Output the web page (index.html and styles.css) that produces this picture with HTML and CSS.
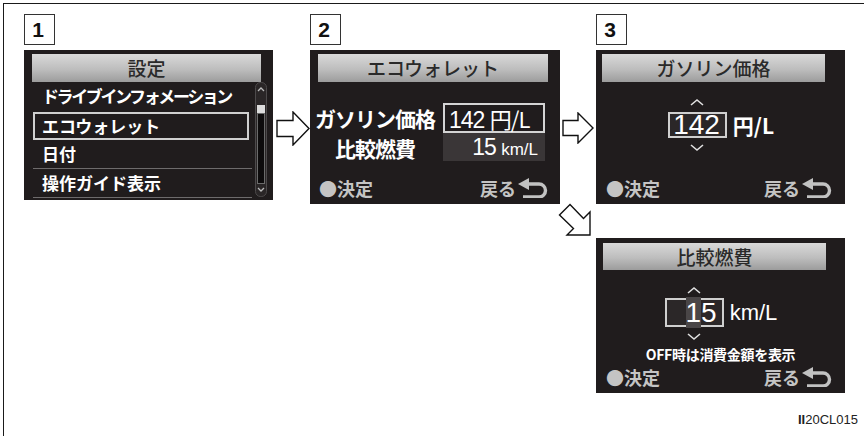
FILE: index.html
```html
<!DOCTYPE html>
<html lang="ja">
<head>
    <meta charset="UTF-8">
    <meta name="viewport" content="width=device-width, initial-scale=1.0">
    <title>エコウォレット設定</title>
    <link rel="stylesheet" href="styles.css">
</head>
<body>
    <div class="frame">
        <div class="row-top">
            <!-- step 1: settings menu -->
            <div class="step">
                <div class="step-no">1</div>
                <div class="screen screen-menu">
                    <div class="screen-title">設定</div>
                    <div class="menu-body">
                        <ul class="menu-list">
                            <li class="menu-item menu-item-first">ドライブインフォメーション</li>
                            <li class="menu-item is-selected">エコウォレット</li>
                            <li class="menu-item">日付</li>
                            <li class="menu-item">操作ガイド表示</li>
                        </ul>
                        <svg class="scrollbar" width="12" height="115" viewBox="0 0 12 115">
                            <rect x="0.5" y="0.5" width="11" height="114" rx="5" fill="#2a2627" stroke="#4d4a4b"/>
                            <polyline points="3,9 6,6 9,9" fill="none" stroke="#bcbcbc" stroke-width="1.3"/>
                            <rect x="2" y="23" width="8" height="8" fill="#dcdcdc"/>
                            <rect x="2.5" y="31.5" width="7" height="70" fill="#0d0b0c" stroke="#6b6b6b"/>
                            <polyline points="3,106 6,109 9,106" fill="none" stroke="#bcbcbc" stroke-width="1.3"/>
                        </svg>
                    </div>
                </div>
            </div>

            <svg class="arrow arrow-first" width="34" height="35" viewBox="0 0 34 35">
                <polygon points="1,9.5 17,9.5 17,1 33,17.5 17,34 17,25.5 1,25.5" fill="#fff" stroke="#111" stroke-width="1.4" stroke-linejoin="miter"/>
            </svg>

            <!-- step 2: eco wallet -->
            <div class="step">
                <div class="step-no">2</div>
                <div class="screen screen-eco">
                    <div class="screen-title">エコウォレット</div>
                    <div class="eco-grid">
                        <div class="eco-label">ガソリン価格</div>
                        <div class="eco-value eco-value-box">142 <span class="cjk">円/L</span></div>
                        <div class="eco-label">比較燃費</div>
                        <div class="eco-value eco-value-fill">15 <span class="eco-small">km/L</span></div>
                    </div>
                    <div class="screen-foot">
                        <span>●決定</span>
                        <span class="foot-back">戻る<svg class="back-icon" width="30" height="20" viewBox="0 0 30 20"><polygon points="0,6 11,0 11,12" fill="#c2c2c2"/><path d="M9 6 H21 A6.5 6.5 0 0 1 21 19 H5" fill="none" stroke="#c2c2c2" stroke-width="3.4"/></svg></span>
                    </div>
                </div>
            </div>

            <svg class="arrow arrow-second" width="32" height="32" viewBox="0 0 32 32">
                <polygon points="1,8.5 16,8.5 16,1 31,16 16,31 16,23.5 1,23.5" fill="#fff" stroke="#111" stroke-width="1.4"/>
            </svg>

            <!-- step 3: fuel price -->
            <div class="step">
                <div class="step-no">3</div>
                <div class="screen screen-edit">
                    <div class="screen-title">ガソリン価格</div>
                    <div class="spinner">
                        <svg class="chev" width="14" height="8" viewBox="0 0 14 8"><polyline points="1,7 7,2 13,7" fill="none" stroke="#e0e0e0" stroke-width="1.6"/></svg>
                        <span></span>
                        <div class="spin-box">142</div>
                        <div class="spin-unit cjk">円/L</div>
                        <svg class="chev" width="14" height="8" viewBox="0 0 14 8"><polyline points="1,1 7,6 13,1" fill="none" stroke="#e0e0e0" stroke-width="1.6"/></svg>
                        <span></span>
                    </div>
                    <div class="screen-foot screen-foot-edit">
                        <span>●決定</span>
                        <span class="foot-back">戻る<svg class="back-icon" width="30" height="20" viewBox="0 0 30 20"><polygon points="0,6 11,0 11,12" fill="#c2c2c2"/><path d="M9 6 H21 A6.5 6.5 0 0 1 21 19 H5" fill="none" stroke="#c2c2c2" stroke-width="3.4"/></svg></span>
                    </div>
                </div>
            </div>
        </div>

        <div class="row-low">
            <svg class="arrow-diag" width="34" height="34" viewBox="0 0 34 34">
                <polygon points="12,1.5 25.5,15.5 32,9 32,32 9,32 15.5,25.5 1.5,12" fill="#fff" stroke="#111" stroke-width="1.4"/>
            </svg>

            <!-- step 3b: compared mileage -->
            <div class="screen screen-edit screen-mileage">
                <div class="screen-title">比較燃費</div>
                <div class="spinner spinner-mileage">
                    <svg class="chev" width="14" height="8" viewBox="0 0 14 8"><polyline points="1,7 7,2 13,7" fill="none" stroke="#e0e0e0" stroke-width="1.6"/></svg>
                    <span></span>
                    <div class="spin-box"><span class="cursor">1</span>5</div>
                    <div class="spin-unit spin-unit-latin">km/L</div>
                    <svg class="chev" width="14" height="8" viewBox="0 0 14 8"><polyline points="1,1 7,6 13,1" fill="none" stroke="#e0e0e0" stroke-width="1.6"/></svg>
                    <span></span>
                </div>
                <div class="spin-note">OFF時は消費金額を表示</div>
                <div class="screen-foot screen-foot-edit">
                    <span>●決定</span>
                    <span class="foot-back">戻る<svg class="back-icon" width="30" height="20" viewBox="0 0 30 20"><polygon points="0,6 11,0 11,12" fill="#c2c2c2"/><path d="M9 6 H21 A6.5 6.5 0 0 1 21 19 H5" fill="none" stroke="#c2c2c2" stroke-width="3.4"/></svg></span>
                </div>
            </div>
        </div>

        <div class="code-label"><b>II</b>20CL015</div>
    </div>
</body>
</html>
```

FILE: styles.css
```css
body {
    margin: 0;
    background: #ffffff;
    font-family: "Liberation Sans", "Noto Sans CJK JP", sans-serif;
    color: #222;
}

.cjk {
    font-family: "Noto Sans CJK JP", sans-serif;
}

.frame {
    margin: 3px 0 0 3px;
    height: 433px;
    box-sizing: border-box;
    border-top: 1px solid #1a1a1a;
    border-left: 1px solid #1a1a1a;
    padding: 10px 0 0 20px;
    display: flex;
    flex-direction: column;
}

.row-top {
    display: flex;
    align-items: flex-start;
}

.step {
    display: flex;
    flex-direction: column;
}

.step-no {
    width: 31px;
    height: 31px;
    box-sizing: border-box;
    border: 1px solid #333;
    margin-bottom: 5px;
    padding-right: 3px;
    font: bold 21px/29px "Liberation Sans", sans-serif;
    text-align: center;
    color: #111;
}

.arrow-first {
    margin: 97px 0 0 3px;
}

.arrow-second {
    margin: 98px 2px 0 2px;
}

/* screens */
.screen {
    background: #201c1d;
    display: flex;
    flex-direction: column;
    box-sizing: border-box;
    font-family: "Noto Sans CJK JP", sans-serif;
}

.screen-menu {
    width: 249px;
    height: 150px;
}

.screen-eco {
    width: 250px;
    height: 154px;
}

.screen-edit {
    width: 249px;
    height: 154px;
}

.screen-title {
    margin: 4px 12px 0 8px;
    height: 28px;
    background: linear-gradient(to bottom, #d9d9d9, #bdbdbd 55%, #9c9c9c);
    color: #2a2a2a;
    font-size: 19px;
    font-weight: 500;
    line-height: 28px;
    text-align: center;
}

.screen-edit .screen-title {
    margin: 4px 20px 0 6px;
}

/* menu */
.menu-body {
    display: flex;
    margin-left: 9px;
}

.menu-list {
    list-style: none;
    margin: 0;
    padding: 0;
    width: 219px;
}

.menu-item {
    height: 29px;
    box-sizing: border-box;
    border-bottom: 1px solid #6e6b6c;
    padding-left: 9px;
    color: #fff;
    font-size: 17px;
    font-weight: bold;
    line-height: 28px;
    white-space: nowrap;
}

.menu-item-first {
    border-bottom-color: transparent;
    letter-spacing: -2.4px;
}

.menu-item.is-selected {
    height: 28px;
    margin: 1px 3px 0 0;
    border: 2px solid #d0d0d0;
    padding-left: 7px;
    line-height: 24px;
}

.scrollbar {
    margin-left: 3px;
    display: block;
}

/* eco wallet */
.eco-grid {
    display: grid;
    grid-template-columns: 124px 102px;
    grid-template-rows: 30px 28px;
    column-gap: 6px;
    margin: 21px 0 0 3px;
}

.eco-label {
    color: #fff;
    font-size: 21px;
    font-weight: bold;
    line-height: 30px;
    text-align: center;
    letter-spacing: -1px;
    white-space: nowrap;
}

.eco-value {
    color: #fff;
    font-family: "Liberation Sans", sans-serif;
    font-size: 23px;
    white-space: nowrap;
    box-sizing: border-box;
}

.eco-value-box {
    border: 2px solid #d4d4d4;
    padding-left: 4px;
    line-height: 26px;
    letter-spacing: -1px;
}

.eco-value-box .cjk {
    font-size: 22px;
    letter-spacing: -1px;
}

.eco-value-fill {
    background: #3a3637;
    text-align: right;
    padding-right: 7px;
    line-height: 28px;
    letter-spacing: -1px;
}

.eco-small {
    font-size: 17px;
    letter-spacing: 0;
}

/* footer */
.screen-foot {
    margin-top: auto;
    display: flex;
    justify-content: space-between;
    align-items: center;
    padding: 0 12px 5px 9px;
    color: #c4c4c4;
    font-size: 18px;
    font-weight: bold;
    line-height: 22px;
}

.screen-foot-edit {
    padding: 0 13px 5px 10px;
}

.foot-back {
    display: flex;
    align-items: center;
}

.back-icon {
    margin-left: 2px;
}

/* value editor */
.spinner {
    display: grid;
    grid-template-columns: auto auto;
    justify-content: center;
    align-items: center;
    column-gap: 6px;
    row-gap: 6px;
    margin-top: 16px;
    padding-left: 1px;
}

.chev {
    display: block;
    justify-self: center;
}

.spin-box {
    width: 59px;
    height: 26px;
    box-sizing: border-box;
    border: 2px solid #cfcfcf;
    background: #2b2728;
    color: #fff;
    font: 28px/22px "Liberation Sans", sans-serif;
    text-align: right;
    padding-right: 5px;
}

.spin-unit {
    color: #fff;
    font-size: 21px;
    font-weight: bold;
    line-height: 26px;
}

.spin-unit-latin {
    font-family: "Liberation Sans", sans-serif;
    font-size: 22px;
    font-weight: normal;
}

.row-low {
    display: flex;
    align-items: flex-start;
    margin: -1px 0 0 534px;
}

.arrow-diag {
    display: block;
}

.screen-mileage {
    height: 155px;
    margin: 35px 0 0 4px;
}

.screen-mileage .screen-title {
    margin: 5px 19px 0 7px;
    height: 27px;
    line-height: 27px;
}

.spinner-mileage {
    row-gap: 4px;
}

.spinner-mileage .spin-box {
    height: 29px;
    line-height: 25px;
}

.spinner-mileage .chev:last-of-type {
    margin-top: 2px;
}

.cursor {
    background: #4a4647;
}

.spin-note {
    margin-top: 4px;
    color: #fff;
    font-size: 14px;
    font-weight: bold;
    line-height: 18px;
    text-align: center;
    letter-spacing: -0.3px;
}

.code-label {
    align-self: flex-end;
    margin: auto 6px 9px 0;
    font-size: 13px;
    color: #222;
}
```
